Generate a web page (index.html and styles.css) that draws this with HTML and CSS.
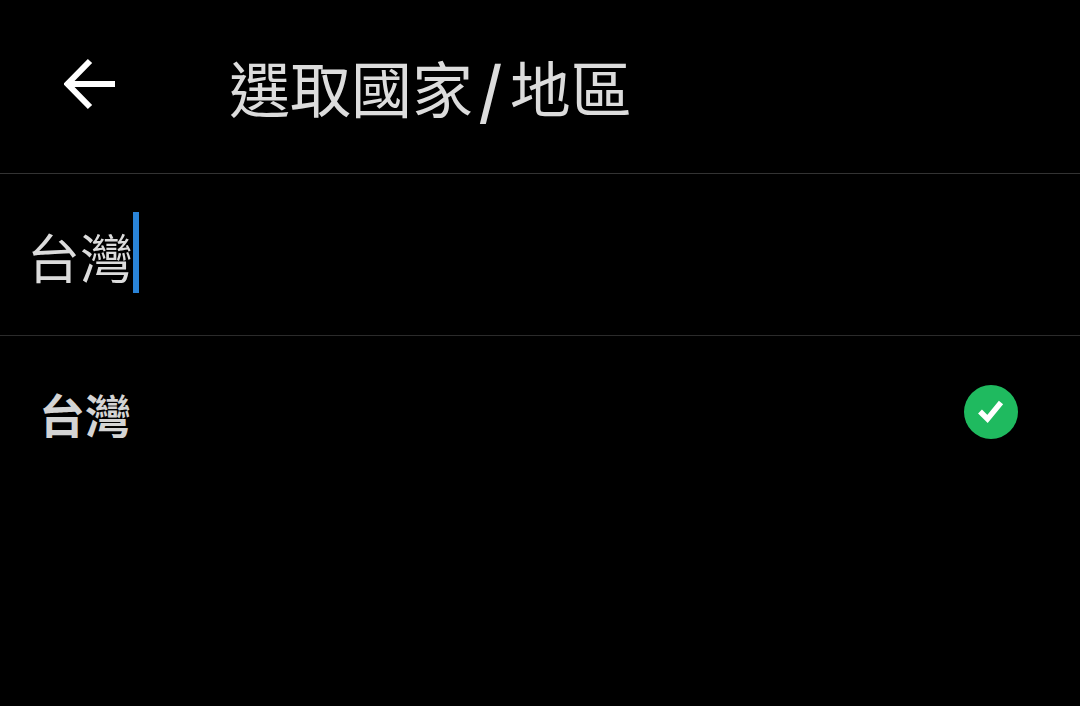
FILE: index.html
```html
<!DOCTYPE html>
<html lang="zh-TW">
<head>
    <meta charset="UTF-8">
    <meta name="viewport" content="width=device-width, initial-scale=1.0">
    <title>選取國家/地區</title>
    <link rel="stylesheet" href="styles.css">
</head>

<body>
    <header class="topbar">
        <svg class="back-icon" width="52" height="52" viewBox="0 0 52 52">
            <path d="M51 26H4M26 3L3.500 26L26 49" fill="none" stroke="#fff" stroke-width="6"/>
        </svg>
        <h1 class="title">選取國家<span class="slash">/</span>地區</h1>
    </header>

    <div class="search">
        <span class="search-text">台灣</span>
        <span class="caret"></span>
    </div>

    <div class="result">
        <span class="result-name">台灣</span>
        <svg class="check-icon" width="54" height="54" viewBox="0 0 54 54">
            <circle cx="27" cy="27" r="27" fill="#1fba5f"/>
            <path d="M16 26.500L23.500 34L37 17.500" fill="none" stroke="#fff" stroke-width="5.500"/>
        </svg>
    </div>
</body>
</html>
```

FILE: styles.css
```css
body {
    margin: 0;
    height: 706px;
    overflow: hidden;
    background-color: #000;
    color: #dcdcdc;
    font-family: "Noto Sans CJK TC", "Liberation Sans", sans-serif;
}

.topbar {
    display: flex;
    align-items: center;
    height: 174px;
    padding-left: 64px;
    box-sizing: border-box;
    border-bottom: 1px solid #333;
}

.back-icon {
    margin-bottom: 6px;
}

.title {
    margin: 0 0 0 113px;
    font-size: 61px;
    font-weight: 400;
    line-height: 1;
}

.slash {
    margin: 0 7px 0 6px;
    font-weight: 700;
}

.search {
    display: flex;
    align-items: center;
    height: 162px;
    padding-left: 27px;
    box-sizing: border-box;
    border-bottom: 1px solid #2b2b2b;
}

.search-text {
    margin-top: 4px;
    font-size: 53px;
    font-weight: 400;
    line-height: 1;
}

.caret {
    width: 6px;
    height: 81px;
    margin-bottom: 4px;
    background-color: #2a84d8;
}

.result {
    display: flex;
    align-items: center;
    justify-content: space-between;
    height: 152px;
    padding: 0 62px 0 39px;
}

.result-name {
    margin-top: 2px;
    font-size: 46px;
    font-weight: 600;
    line-height: 1;
    color: #d4d4d4;
}
```
